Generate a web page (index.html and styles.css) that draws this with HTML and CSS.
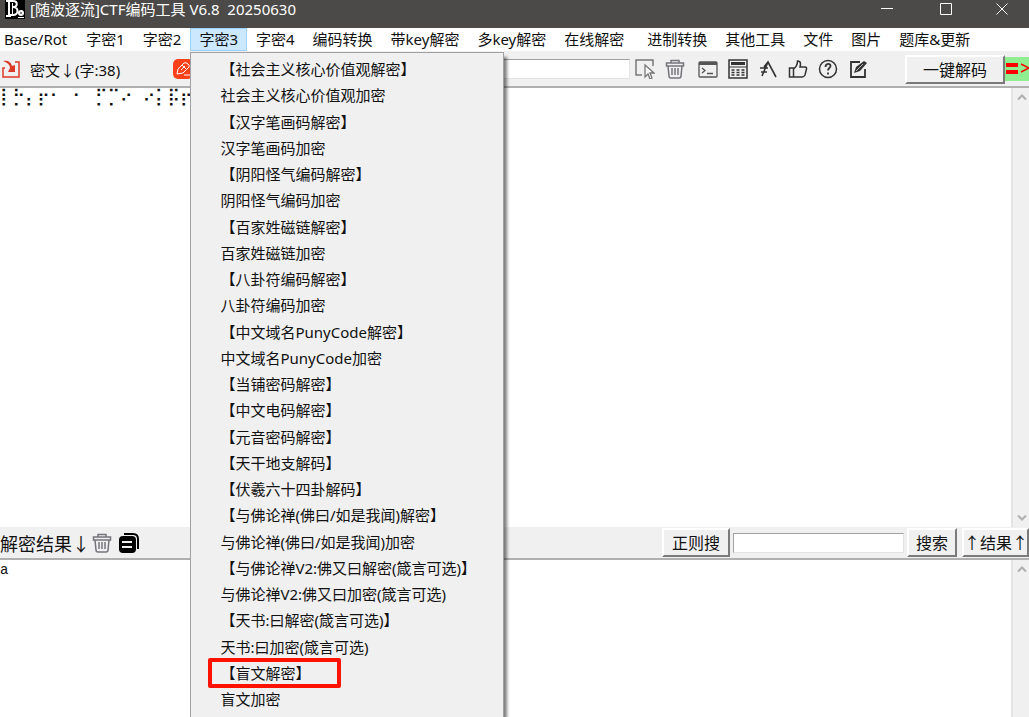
FILE: index.html
```html
<!DOCTYPE html>
<html lang="zh-CN">
<head>
  <meta charset="UTF-8" />
  <meta name="viewport" content="width=device-width, initial-scale=1.0"/>
  <title>[随波逐流]CTF编码工具 V6.8</title>
  <link rel="stylesheet" href="styles.css">
</head>
<body>
  <div class="app">

    <!-- Title bar -->
    <header class="titlebar">
      <svg class="logo" viewBox="0 0 20 19">
        <rect width="20" height="19" fill="#000"/>
        <path d="M1 1h5M1 16h5M4 1v15M5 1h3c5 0 5 6 0 6 6 0 6 8 0 8H5" fill="none" stroke="#fff" stroke-width="2"/>
        <path d="M7.500 3v11" stroke="#fff"/>
        <circle cx="16" cy="13" r="3" fill="#fff"/>
        <path d="M13 17.500h6" stroke="#fff"/>
        <path d="M15 13h2" stroke="#000"/>
      </svg>
      <h1>[随波逐流]CTF编码工具 V6.8&nbsp; 20250630</h1>
      <div class="window-buttons">
        <button aria-label="最小化"><svg viewBox="0 0 12 12"><path d="M0 5.500h12"/></svg></button>
        <button aria-label="最大化"><svg viewBox="0 0 12 12"><path d="M.5.5h11v11H.5z"/></svg></button>
        <button aria-label="关闭"><svg viewBox="0 0 12 12"><path d="M.5.5l11 11M11.500.5l-11 11"/></svg></button>
      </div>
    </header>

    <!-- Menu bar -->
    <nav>
      <ul class="menubar">
        <li><button>Base/Rot</button></li>
        <li><button>字密1</button></li>
        <li><button>字密2</button></li>
        <li>
          <button class="open">字密3</button>
          <ul class="dropdown">
            <li><button>【社会主义核心价值观解密】</button></li>
            <li><button>社会主义核心价值观加密</button></li>
            <li><button>【汉字笔画码解密】</button></li>
            <li><button>汉字笔画码加密</button></li>
            <li><button>【阴阳怪气编码解密】</button></li>
            <li><button>阴阳怪气编码加密</button></li>
            <li><button>【百家姓磁链解密】</button></li>
            <li><button>百家姓磁链加密</button></li>
            <li><button>【八卦符编码解密】</button></li>
            <li><button>八卦符编码加密</button></li>
            <li><button>【中文域名PunyCode解密】</button></li>
            <li><button>中文域名PunyCode加密</button></li>
            <li><button>【当铺密码解密】</button></li>
            <li><button>【中文电码解密】</button></li>
            <li><button>【元音密码解密】</button></li>
            <li><button>【天干地支解码】</button></li>
            <li><button>【伏羲六十四卦解码】</button></li>
            <li><button>【与佛论禅(佛曰/如是我闻)解密】</button></li>
            <li><button>与佛论禅(佛曰/如是我闻)加密</button></li>
            <li><button>【与佛论禅V2:佛又曰解密(箴言可选)】</button></li>
            <li><button>与佛论禅V2:佛又曰加密(箴言可选)</button></li>
            <li><button>【天书:曰解密(箴言可选)】</button></li>
            <li><button>天书:曰加密(箴言可选)</button></li>
            <li class="marked"><button>【盲文解密】</button></li>
            <li><button>盲文加密</button></li>
          </ul>
        </li>
        <li><button>字密4</button></li>
        <li><button>编码转换</button></li>
        <li><button>带key解密</button></li>
        <li><button>多key解密</button></li>
        <li><button>在线解密</button></li>
        <li class="group-start"><button>进制转换</button></li>
        <li><button>其他工具</button></li>
        <li><button>文件</button></li>
        <li><button>图片</button></li>
        <li><button>题库&amp;更新</button></li>
      </ul>
    </nav>

    <!-- Cipher text toolbar -->
    <div class="toolbar">
      <button class="icon import" aria-label="导入">
        <svg viewBox="0 0 20 20" fill="none" stroke="#dc3a28" stroke-width="1.500">
          <path d="M4 9H2v9h16V3h-4"/>
          <path d="M2 2c5-1 8 1 9 5l3-1v7H7l2-4c0-3-2-5-7-7z" fill="#dc3a28" stroke="none"/>
        </svg>
      </button>
      <label for="cipher">密文↓(字:38)</label>
      <button class="icon edit" aria-label="编辑">
        <svg viewBox="0 0 20 20" fill="none" stroke="#fff">
          <rect width="20" height="20" rx="5" fill="#fb4119" stroke="none"/>
          <path d="M4 15l1-5 6-6q2-1 4 1t1 3l-6 6zM9 6l5 5M8 11l4-4M11 16h6"/>
        </svg>
      </button>
      <input type="text" class="key-input" aria-label="密钥">
      <div class="icon-group">
        <button class="icon" aria-label="选择">
          <svg viewBox="0 0 20 20" fill="none" stroke="#777">
            <path d="M7 16H1V1h17v6" stroke-width="1.5"/>
            <path d="M10 6v12l3-3 2 5 2-1-2-5h4z" fill="#f8f8f8" stroke-width="1.3"/>
          </svg>
        </button>
        <button class="icon" aria-label="清空">
          <svg viewBox="0 0 20 20" fill="none" stroke="#74747c" stroke-width="1.5">
            <path d="M6 4V1.500h8V4M1.500 4h17v3h-17zM3 7l1 10q0 2 2 2h8q2 0 2-2l1-10M7 9v7M10 9v7M13 9v7"/>
          </svg>
        </button>
      </div>
      <div class="icon-group">
        <button class="icon" aria-label="终端">
          <svg viewBox="0 0 20 20" fill="none" stroke="#555" stroke-width="1.3">
            <rect x="1" y="3" width="18" height="15" rx="1"/>
            <path d="M1 4.500h18" stroke-width="3"/>
            <path d="M4 9l3 2.500-3 2.500M9 14.500h6"/>
          </svg>
        </button>
        <button class="icon" aria-label="表格">
          <svg viewBox="0 0 20 20" fill="none" stroke="#333">
            <rect x="1" y="1" width="18" height="18" stroke-width="1.5"/>
            <path d="M3 4.500h14" stroke-width="3"/>
            <path d="M1 8h18"/>
            <path d="M3.500 11h13M3.500 13.500h13M3.500 16h13" stroke-width="1.3" stroke-dasharray="3 2"/>
          </svg>
        </button>
        <button class="icon" aria-label="字体">
          <svg viewBox="0 0 20 20" fill="none" stroke="#333" stroke-width="1.6">
            <path d="M6 8l4-5 8 15M10 3L4 17M2 9h8M3 13h6"/>
          </svg>
        </button>
        <button class="icon" aria-label="点赞">
          <svg viewBox="0 0 20 20" fill="none" stroke="#333" stroke-width="1.5">
            <path d="M1.500 9h4v9h-4zM5.500 10q4-3 4-8c4 0 3 4 2.500 6h5q2 0 1.500 2l-1.500 6q-1 2-3 2H5.500"/>
          </svg>
        </button>
        <button class="icon" aria-label="帮助">
          <svg viewBox="0 0 20 20" fill="none" stroke="#333" stroke-width="1.500">
            <circle cx="10" cy="10" r="8.500"/>
            <path d="M7.500 8c0-4 5-4 5-1 0 2-2.500 2-2.500 4.500M10 13.500v2" stroke-width="1.800"/>
          </svg>
        </button>
        <button class="icon" aria-label="修改">
          <svg viewBox="0 0 20 20" fill="none" stroke="#333" stroke-width="1.800">
            <path d="M12 3H3v15h14V10"/>
            <path d="M6 14l2-6 8-6 3 2-7 8z" fill="#333" stroke="none"/>
            <path d="M8 12l7-7" stroke="#bbb" stroke-width="1"/>
          </svg>
        </button>
      </div>
      <button class="btn decode">一键解码</button>
      <span class="arrow"><svg viewBox="0 0 26 24" fill="none" stroke="#f00"><path d="M1 8h12M1 15h12" stroke-width="4"/><path d="M16 7l8 4-8 4" stroke-width="1.500"/></svg></span>
    </div>

    <div class="pane cipher-pane">
      <textarea id="cipher" spellcheck="false">⡇⡓⡄⡖⠂ ⠂ ⡋⡉⠔ ⠔⡅⡯⡖</textarea>
      <div class="scrollbar">
        <button aria-label="向上滚动"><svg viewBox="0 0 10 6"><path d="M1 5.500l4-4 4 4"/></svg></button>
        <button aria-label="向下滚动"><svg viewBox="0 0 10 6"><path d="M1 .5l4 4 4-4"/></svg></button>
      </div>
    </div>

    <!-- Result toolbar -->
    <div class="toolbar result-bar">
      <label class="result-label" for="result">解密结果↓</label>
      <button class="icon clear-result" aria-label="清空结果">
        <svg viewBox="0 0 20 20" fill="none" stroke="#74747c" stroke-width="1.5">
          <path d="M6 4V1.500h8V4M1.500 4h17v3h-17zM3 7l1 10q0 2 2 2h8q2 0 2-2l1-10M7 9v7M10 9v7M13 9v7"/>
        </svg>
      </button>
      <button class="icon" aria-label="复制结果">
        <svg viewBox="0 0 20 20" fill="none" stroke="#000" stroke-width="2">
          <path d="M5 1h9q5 0 5 5v10"/>
          <rect x="0" y="3" width="17" height="17" rx="4" fill="#000" stroke="none"/>
          <path d="M3 9h10M3 14h10" stroke="#f0f0f0"/>
        </svg>
      </button>
      <button class="btn regex">正则搜</button>
      <input type="text" class="search-input" aria-label="搜索内容">
      <button class="btn search">搜索</button>
      <button class="btn to-top">↑结果↑</button>
    </div>

    <div class="pane result-pane">
      <textarea id="result" spellcheck="false">a</textarea>
      <div class="scrollbar">
        <button aria-label="向上滚动"><svg viewBox="0 0 10 6"><path d="M1 5.500l4-4 4 4"/></svg></button>
      </div>
    </div>

  </div>
</body>
</html>
```
FILE: styles.css
```css
*,
*::after {
  box-sizing: border-box;
}

body {
  margin: 0;
  font-family: "Noto Sans", "Noto Sans CJK SC", sans-serif;
  font-size: 15px;
  color: #111;
  background-color: #f0f0f0;
}

button {
  margin: 0;
  padding: 0;
  border: none;
  background: none;
  font: inherit;
  color: inherit;
  white-space: nowrap;
}

ul {
  list-style: none;
  margin: 0;
  padding: 0;
}

svg {
  display: block;
}

.app {
  position: relative;
  display: flex;
  flex-direction: column;
  height: 100vh;
  overflow: hidden;
}

/* Title bar */
.titlebar {
  display: flex;
  align-items: flex-start;
  height: 28px;
  padding-left: 5px;
  background-color: #4c4a48;
  color: #fff;
}

.logo {
  width: 20px;
  height: 19px;
}

.titlebar h1 {
  margin: 0 0 0 5px;
  font-size: 15px;
  font-weight: normal;
  line-height: 18px;
}

.window-buttons {
  display: flex;
  margin-left: auto;
}

.window-buttons button {
  display: flex;
  justify-content: center;
  width: 59px;
  padding-top: 3px;
}

.window-buttons svg {
  width: 12px;
  height: 12px;
  fill: none;
  stroke: #fff;
}

.window-buttons button:last-child {
  width: 54px;
}

/* Menu bar */
.menubar {
  display: flex;
  height: 24px;
  background-color: #fff;
  border-bottom: 1px solid #f0f0f0;
}

.menubar > li:first-child {
  margin: 0 1px 0 -5px;
}

.menubar > li > button {
  height: 23px;
  padding: 0 8px;
  border: 1px solid transparent;
  line-height: 21px;
}

.menubar > li > .open {
  background-color: #cce8ff;
  border-color: #99d1ff;
}

.menubar .group-start {
  margin-left: 5px;
}

/* Opened menu runs down to the bottom of the window */
.dropdown {
  position: absolute;
  top: 52px;
  bottom: 0;
  z-index: 2;
  display: flex;
  flex-direction: column;
  justify-content: space-between;
  width: 314px;
  padding: 3px 0 5px;
  background-color: #f0f0f0;
  border: 1px solid #a0a0a0;
  border-bottom: none;
  box-shadow: 4px 4px 3px -1px rgba(0, 0, 0, 0.5);
}

.dropdown button {
  display: block;
  width: 100%;
  height: 26px;
  padding-left: 29px;
  line-height: 26px;
  text-align: left;
}

.marked {
  position: relative;
}

.marked::after {
  content: "";
  position: absolute;
  top: -2px;
  left: 17px;
  width: 133px;
  height: 30px;
  border: 4px solid #ff1200;
  border-radius: 2px;
}

/* Toolbars */
.toolbar {
  display: flex;
  align-items: center;
  height: 34px;
}

.toolbar input {
  height: 20px;
  border: 1px solid #e3e3e3;
  border-top-color: #a0a0a0;
  border-left-color: #a0a0a0;
  background-color: #fff;
}

.icon {
  display: flex;
  justify-content: center;
  flex: none;
  width: 30px;
}

.icon svg {
  width: 20px;
  height: 20px;
}

.import {
  width: 22px;
  margin-right: 8px;
}

.edit {
  width: 20px;
  margin-left: 53px;
}

.key-input {
  flex: 1;
  min-width: 0;
}

.icon-group {
  display: flex;
}

.icon-group + .icon-group {
  margin-left: 3px;
}

.btn {
  flex: none;
  height: 29px;
  border: 2px solid;
  border-color: #fff #7a7a7a #7a7a7a #fff;
  font-family: "Noto Sans CJK SC", sans-serif;
  font-size: 16px;
  line-height: 25px;
}

.decode {
  width: 100px;
  margin-left: 32px;
}

.arrow {
  flex: none;
  width: 24px;
  overflow: hidden;
  background-color: #90ee90;
}

.arrow svg {
  width: 26px;
  height: 24px;
}

.result-bar {
  height: 31px;
}

.result-label {
  font-size: 18px;
}

.clear-result {
  width: 24px;
}

.regex {
  width: 68px;
  margin-left: auto;
}

.search-input {
  width: 171px;
  margin: 0 3px;
}

.search {
  width: 50px;
  margin-right: 5px;
}

.to-top {
  width: 67px;
}

/* Text panes */
.pane {
  display: flex;
  min-height: 0;
  border-top: 2px solid #b0b0b0;
}

.cipher-pane {
  flex: 14 1 0;
}

.result-pane {
  flex: 5 1 0;
}

.pane textarea {
  flex: 1;
  margin: 0;
  padding: 0;
  border: none;
  resize: none;
  overflow: hidden;
  background-color: #fff;
  color: #111;
}

#cipher {
  font: 17px/20px "Liberation Mono", "DejaVu Sans", monospace;
}

#result {
  font: 14px/20px "Liberation Mono", monospace;
}

.scrollbar {
  display: flex;
  flex-direction: column;
  justify-content: space-between;
  width: 18px;
  padding: 6px 0;
  border-left: 2px solid #e3e3e3;
}

.scrollbar button {
  display: flex;
  justify-content: flex-end;
  padding-right: 2px;
}

.scrollbar svg {
  width: 10px;
  height: 6px;
  fill: none;
  stroke: #b0b0b0;
  stroke-width: 2;
}
```
